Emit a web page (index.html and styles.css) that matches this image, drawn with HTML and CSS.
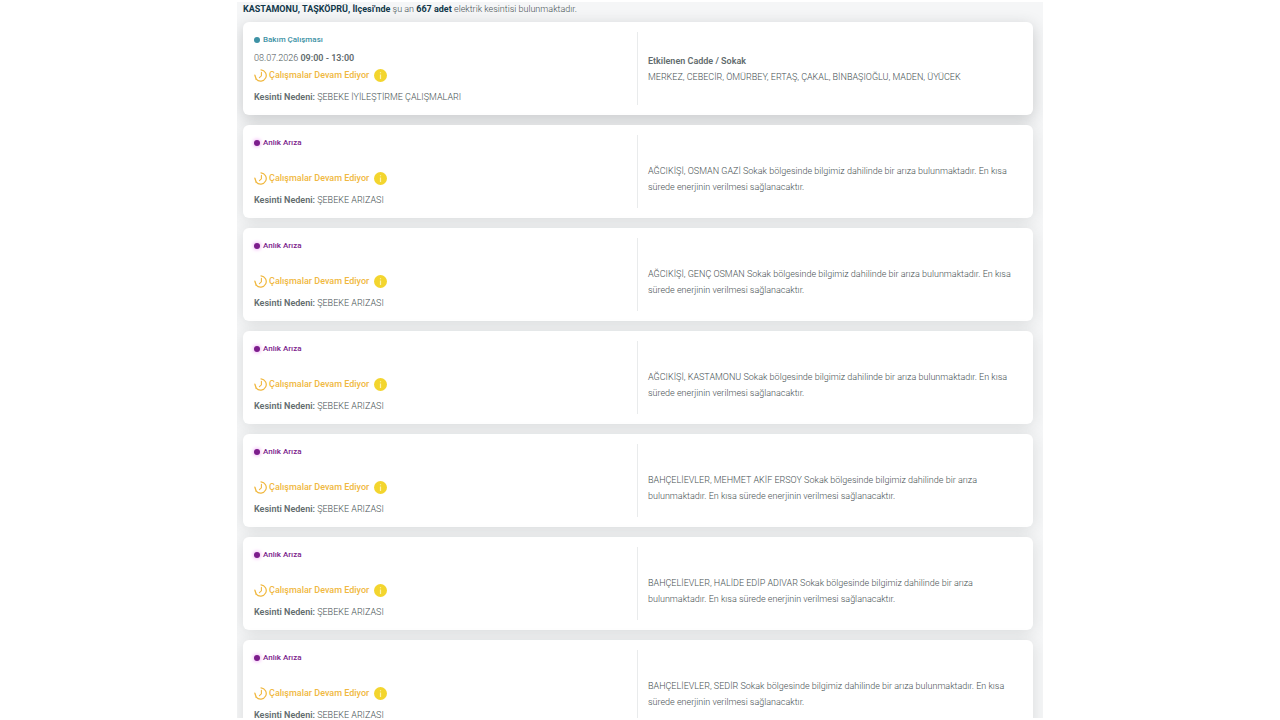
FILE: index.html
```html
<!DOCTYPE html>
<html lang="tr">
<head>
  <meta charset="UTF-8" />
  <meta name="viewport" content="width=device-width, initial-scale=1.0"/>
  <title>Elektrik Kesintileri</title>
  <link rel="stylesheet" href="styles.css">
</head>
<body>
  <svg class="icon-defs" aria-hidden="true">
    <symbol id="icon-clock" viewBox="0 0 13 13">
      <path d="M7 .8A5.7 5.7 0 1 1 2.2 10.2" fill="none" stroke="currentColor" stroke-width="1.2" stroke-linecap="round"/>
      <path d="M2.2 10.2L.9 6.2" fill="none" stroke="currentColor" stroke-width="1.3" stroke-linecap="round"/>
      <path d="M7.4 3.4V6.8L5.4 8.6" fill="none" stroke="currentColor" stroke-width="1.1" stroke-linecap="round"/>
    </symbol>
    <symbol id="icon-info" viewBox="0 0 13 13">
      <circle cx="6.5" cy="6.5" r="6.5" fill="#f3d52e"/>
      <path d="M6.5 5.6V10M6.5 3.2V4.3" stroke="#fdf3b0" stroke-width="1.2"/>
    </symbol>
  </svg>

  <main class="outages">
    <p class="summary"><strong>KASTAMONU, TAŞKÖPRÜ, İlçesi'nde</strong> şu an <strong>667 adet</strong> elektrik kesintisi bulunmaktadır.</p>

    <article class="card card-active">
      <div class="card-info">
        <div class="type type-planned">Bakım Çalışması</div>
        <div class="date">08.07.2026 <b>09:00 - 13:00</b></div>
        <div class="status">
          <svg class="icon"><use href="#icon-clock"/></svg>
          <span>Çalışmalar Devam Ediyor</span>
          <button class="btn-info" aria-label="Bilgi"><svg class="icon"><use href="#icon-info"/></svg></button>
        </div>
        <div class="reason"><b>Kesinti Nedeni:</b> ŞEBEKE İYİLEŞTİRME ÇALIŞMALARI</div>
      </div>
      <div class="card-streets">
        <b>Etkilenen Cadde / Sokak</b>
        <p>MERKEZ, CEBECİR, ÖMÜRBEY, ERTAŞ, ÇAKAL, BİNBAŞIOĞLU, MADEN, ÜYÜCEK</p>
      </div>
    </article>

    <article class="card">
      <div class="card-info">
        <div class="type type-fault">Anlık Arıza</div>
        <div class="date"></div>
        <div class="status">
          <svg class="icon"><use href="#icon-clock"/></svg>
          <span>Çalışmalar Devam Ediyor</span>
          <button class="btn-info" aria-label="Bilgi"><svg class="icon"><use href="#icon-info"/></svg></button>
        </div>
        <div class="reason"><b>Kesinti Nedeni:</b> ŞEBEKE ARIZASI</div>
      </div>
      <div class="card-streets streets-fault">
        <p>AĞCIKİŞİ, OSMAN GAZİ Sokak bölgesinde bilgimiz dahilinde bir arıza bulunmaktadır. En kısa sürede enerjinin verilmesi sağlanacaktır.</p>
      </div>
    </article>

    <article class="card">
      <div class="card-info">
        <div class="type type-fault">Anlık Arıza</div>
        <div class="date"></div>
        <div class="status">
          <svg class="icon"><use href="#icon-clock"/></svg>
          <span>Çalışmalar Devam Ediyor</span>
          <button class="btn-info" aria-label="Bilgi"><svg class="icon"><use href="#icon-info"/></svg></button>
        </div>
        <div class="reason"><b>Kesinti Nedeni:</b> ŞEBEKE ARIZASI</div>
      </div>
      <div class="card-streets streets-fault">
        <p>AĞCIKİŞİ, GENÇ OSMAN Sokak bölgesinde bilgimiz dahilinde bir arıza bulunmaktadır. En kısa sürede enerjinin verilmesi sağlanacaktır.</p>
      </div>
    </article>

    <article class="card">
      <div class="card-info">
        <div class="type type-fault">Anlık Arıza</div>
        <div class="date"></div>
        <div class="status">
          <svg class="icon"><use href="#icon-clock"/></svg>
          <span>Çalışmalar Devam Ediyor</span>
          <button class="btn-info" aria-label="Bilgi"><svg class="icon"><use href="#icon-info"/></svg></button>
        </div>
        <div class="reason"><b>Kesinti Nedeni:</b> ŞEBEKE ARIZASI</div>
      </div>
      <div class="card-streets streets-fault">
        <p>AĞCIKİŞİ, KASTAMONU Sokak bölgesinde bilgimiz dahilinde bir arıza bulunmaktadır. En kısa sürede enerjinin verilmesi sağlanacaktır.</p>
      </div>
    </article>

    <article class="card">
      <div class="card-info">
        <div class="type type-fault">Anlık Arıza</div>
        <div class="date"></div>
        <div class="status">
          <svg class="icon"><use href="#icon-clock"/></svg>
          <span>Çalışmalar Devam Ediyor</span>
          <button class="btn-info" aria-label="Bilgi"><svg class="icon"><use href="#icon-info"/></svg></button>
        </div>
        <div class="reason"><b>Kesinti Nedeni:</b> ŞEBEKE ARIZASI</div>
      </div>
      <div class="card-streets streets-fault">
        <p>BAHÇELİEVLER, MEHMET AKİF ERSOY Sokak bölgesinde bilgimiz dahilinde bir arıza bulunmaktadır. En kısa sürede enerjinin verilmesi sağlanacaktır.</p>
      </div>
    </article>

    <article class="card">
      <div class="card-info">
        <div class="type type-fault">Anlık Arıza</div>
        <div class="date"></div>
        <div class="status">
          <svg class="icon"><use href="#icon-clock"/></svg>
          <span>Çalışmalar Devam Ediyor</span>
          <button class="btn-info" aria-label="Bilgi"><svg class="icon"><use href="#icon-info"/></svg></button>
        </div>
        <div class="reason"><b>Kesinti Nedeni:</b> ŞEBEKE ARIZASI</div>
      </div>
      <div class="card-streets streets-fault">
        <p>BAHÇELİEVLER, HALİDE EDİP ADIVAR Sokak bölgesinde bilgimiz dahilinde bir arıza bulunmaktadır. En kısa sürede enerjinin verilmesi sağlanacaktır.</p>
      </div>
    </article>

    <article class="card">
      <div class="card-info">
        <div class="type type-fault">Anlık Arıza</div>
        <div class="date"></div>
        <div class="status">
          <svg class="icon"><use href="#icon-clock"/></svg>
          <span>Çalışmalar Devam Ediyor</span>
          <button class="btn-info" aria-label="Bilgi"><svg class="icon"><use href="#icon-info"/></svg></button>
        </div>
        <div class="reason"><b>Kesinti Nedeni:</b> ŞEBEKE ARIZASI</div>
      </div>
      <div class="card-streets streets-fault">
        <p>BAHÇELİEVLER, SEDİR Sokak bölgesinde bilgimiz dahilinde bir arıza bulunmaktadır. En kısa sürede enerjinin verilmesi sağlanacaktır.</p>
      </div>
    </article>
  </main>
</body>
</html>
```
FILE: styles.css
```css
* {
  box-sizing: border-box;
}

body {
  margin: 0;
  padding: 2px 0;
  height: 100vh;
  background: #fff;
  color: #485254;
  font-family: Roboto, sans-serif;
  font-size: 9px;
  font-weight: 300;
  line-height: 16px;
}

p {
  margin: 0;
}

b, strong {
  color: #626c6e;
  font-weight: 600;
}

.icon-defs {
  display: none;
}

.outages {
  max-width: 806px;
  height: 100%;
  margin: 0 auto;
  padding: 0 10px 0 6px;
  background: #f5f6f7;
  overflow-y: auto;
  scrollbar-width: none;
}

.summary {
  height: 20px;
  line-height: 14px;
}

.summary strong {
  color: #12384a;
  font-weight: 700;
}

.card {
  display: grid;
  grid-template-columns: 1fr 1fr;
  padding: 10px;
  margin-bottom: 10px;
  background: #fff;
  border-radius: 6px;
  box-shadow: 0 2px 16px rgba(40, 46, 50, 0.13);
}

.card-active {
  box-shadow: 0 4px 16px rgba(40, 46, 50, 0.22);
}

.card-info {
  padding-left: 1px;
  border-right: 1px solid #e9ebec;
  line-height: 18px;
}

.type {
  display: flex;
  align-items: center;
  gap: 3px;
  height: 16px;
  font-size: 8px;
  font-weight: 500;
}

.type::before {
  content: "";
  width: 6px;
  height: 6px;
  border-radius: 50%;
  background: currentColor;
}

.type-planned { color: #3d92a5; }
.type-fault { color: #7c1c8c; }

.type-fault::before {
  box-shadow: 0 0 4px #e884f0;
}

.date {
  height: 18px;
  line-height: 20px;
}

.status {
  display: flex;
  align-items: center;
  gap: 2px;
  height: 18px;
  color: #f0b840;
  font-weight: 500;
}

.icon {
  display: block;
  width: 13px;
  height: 13px;
}

.btn-info {
  margin-left: 3px;
  padding: 0;
  border: none;
  background: none;
  cursor: pointer;
}

.reason {
  padding-top: 3px;
  line-height: 20px;
  height: 21px;
}

.card-streets {
  display: flex;
  flex-direction: column;
  justify-content: center;
  padding-left: 10px;
}

.streets-fault {
  padding-top: 14px;
}
```
